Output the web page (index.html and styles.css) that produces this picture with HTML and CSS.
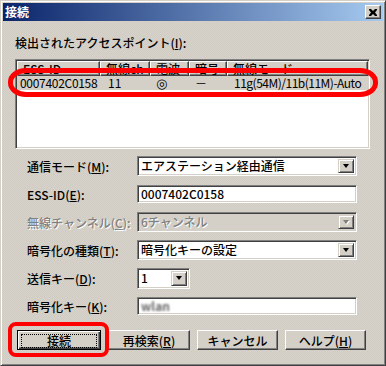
FILE: index.html
```html
<!DOCTYPE html>
<html>
<head>
    <meta charset="UTF-8">
    <title>接続</title>
    <link rel="stylesheet" href="styles.css">
</head>
<body>
    <div class="window">
        <div class="titlebar">
            <span class="title">接続</span>
            <span class="close-btn">
                <svg width="8" height="7" viewBox="0 0 8 7"><path d="M0 0h2l2 2 2-2h2v1l-2 2.5 2 2.5v1h-2l-2-2-2 2h-2v-1l2-2.5-2-2.5z" fill="#000"/></svg>
            </span>
        </div>

        <div class="content">
            <div class="list-label">検出されたアクセスポイント(<u>I</u>):</div>

            <div class="listbox">
                <div class="list-head">
                    <div class="hcell c1">ESS-ID</div>
                    <div class="hcell c2">無線ch</div>
                    <div class="hcell c3">電波</div>
                    <div class="hcell c4">暗号</div>
                    <div class="hcell c5">無線モード</div>
                </div>
                <div class="list-row">
                    <div class="cell c1">0007402C0158</div>
                    <div class="cell c2">11</div>
                    <div class="cell c3"><span class="signal">◎</span></div>
                    <div class="cell c4">－</div>
                    <div class="cell c5">11g(54M)/11b(11M)-Auto</div>
                </div>
            </div>

            <div class="form">
                <div class="form-row">
                    <label>通信モード(<u>M</u>):</label>
                    <div class="combo">
                        <span class="combo-text">エアステーション経由通信</span>
                        <span class="combo-btn"><span class="arrow"></span></span>
                    </div>
                </div>
                <div class="form-row">
                    <label>ESS-ID(<u>E</u>):</label>
                    <div class="edit">0007402C0158</div>
                </div>
                <div class="form-row disabled">
                    <label>無線チャンネル(<u>C</u>):</label>
                    <div class="combo">
                        <span class="combo-text">6チャンネル</span>
                        <span class="combo-btn"><span class="arrow"></span></span>
                    </div>
                </div>
                <div class="form-row">
                    <label>暗号化の種類(<u>T</u>):</label>
                    <div class="combo">
                        <span class="combo-text">暗号化キーの設定</span>
                        <span class="combo-btn"><span class="arrow"></span></span>
                    </div>
                </div>
                <div class="form-row">
                    <label>送信キー(<u>D</u>):</label>
                    <div class="combo small">
                        <span class="combo-text">1</span>
                        <span class="combo-btn"><span class="arrow"></span></span>
                    </div>
                </div>
                <div class="form-row">
                    <label>暗号化キー(<u>K</u>):</label>
                    <div class="edit"><span class="secret">wlan</span></div>
                </div>
            </div>

            <div class="buttons">
                <button class="btn default"><span class="focus">接続</span></button>
                <button class="btn b2">再検索(<u>R</u>)</button>
                <button class="btn">キャンセル</button>
                <button class="btn">ヘルプ(<u>H</u>)</button>
            </div>
        </div>

        <div class="mark mark-row"></div>
        <div class="mark mark-btn"></div>
    </div>
</body>
</html>
```

FILE: styles.css
```css
body { margin: 0; font-family: "Noto Sans CJK JP", "Noto Sans", sans-serif; font-size: 12px; font-weight: 500; color: #000; }
u { text-underline-offset: 1px; }

.window { position: relative; width: 386px; height: 366px; box-sizing: border-box; padding: 2px; border: 1px solid; border-color: #d4d0c8 #404040 #404040 #d4d0c8; box-shadow: inset 1px 1px #fff, inset -1px -1px #808080; background: #d4d0c8 repeating-conic-gradient(#d7d3cb 0 25%, #d0ccc4 0 50%) 0 0 / 2px 2px; }

.titlebar { height: 18px; padding: 0 2px; display: flex; align-items: center; justify-content: space-between; background: linear-gradient(to right, #0a246a, #a6caf0); }
.title { color: #fff; font-weight: bold; line-height: 18px; }
.close-btn { width: 16px; height: 14px; box-sizing: border-box; display: flex; align-items: center; justify-content: center; background: #d4d0c8; border: 1px solid; border-color: #fff #404040 #404040 #fff; box-shadow: inset -1px -1px #808080; }

.content { padding: 15px 0 0 12px; }
.list-label { line-height: 14px; height: 14px; }

.listbox { margin-top: 9px; width: 355px; height: 90px; box-sizing: border-box; padding: 1px; border: 1px solid; border-color: #808080 #fff #fff #808080; box-shadow: inset 1px 1px #404040, inset -1px -1px #d4d0c8; background: #fff; }
.list-head, .list-row { display: flex; }
.hcell { height: 15px; line-height: 13px; box-sizing: border-box; padding-left: 5px; background: #d4d0c8; border: 1px solid; border-color: #fff #404040 #404040 #fff; box-shadow: inset -1px -1px #808080; white-space: nowrap; overflow: hidden; }
.list-row { height: 14px; line-height: 14px; background: #d4d0c8; font-weight: 400; }
.cell { padding-left: 6px; box-sizing: border-box; white-space: nowrap; }
.c1 { width: 83px; }
.c2 { width: 50px; }
.c3 { width: 39px; }
.c4 { width: 38px; }
.c5 { flex: 1; }
.cell.c1 { padding-left: 3px; letter-spacing: -0.3px; }
.cell.c2 { padding-left: 8px; }
.cell.c5 { padding-left: 7px; letter-spacing: -0.5px; }
.signal { font-family: "DejaVu Sans", sans-serif; font-size: 13px; }

.form { margin-top: 3px; padding-left: 12px; }
.form-row { height: 28px; display: flex; align-items: center; }
.form-row label { width: 110px; }
.disabled label, .disabled .combo-text { color: #808080; text-shadow: 1px 1px #fff; }

.combo, .edit { width: 220px; box-sizing: border-box; padding: 2px; border: 1px solid; border-color: #808080 #fff #fff #808080; box-shadow: inset 1px 1px #404040, inset -1px -1px #d4d0c8; background: #fff; }
.combo { height: 20px; display: flex; }
.combo.small { width: 53px; height: 21px; }
.combo-text { flex: 1; line-height: 14px; padding-left: 1px; }
.combo-btn { width: 16px; box-sizing: border-box; display: flex; align-items: center; justify-content: center; background: #d4d0c8; border: 1px solid; border-color: #d4d0c8 #404040 #404040 #d4d0c8; box-shadow: inset 1px 1px #fff, inset -1px -1px #808080; }
.arrow { width: 0; height: 0; border-left: 3.5px solid transparent; border-right: 3.5px solid transparent; border-top: 4px solid #000; }
.disabled .combo { background: #d4d0c8; }
.disabled .arrow { border-top-color: #808080; filter: drop-shadow(1px 1px 0 #fff); }

.edit { height: 18px; line-height: 14px; padding: 1px 3px; }
.secret { color: #6a6a6a; font-weight: bold; filter: blur(1px); }

.buttons { margin-top: 10px; padding-left: 2px; display: flex; gap: 7px; }
.btn { width: 81px; height: 20px; padding: 0; box-sizing: border-box; font: inherit; color: #000; background: #d4d0c8; border: 1px solid; border-color: #fff #404040 #404040 #fff; box-shadow: inset -1px -1px #808080; }
.btn.default { width: 84px; padding: 3px; border-color: #000; box-shadow: inset 1px 1px #fff, inset -1px -1px #404040, inset -2px -2px #808080; }
.btn.b2 { width: 82px; }
.focus { display: block; height: 12px; line-height: 11px; border: 1px dotted #000; }

.mark { position: absolute; box-sizing: border-box; border: 5px solid #f00; }
.mark-row { left: 7px; top: 67px; width: 370px; height: 29px; border-radius: 18px / 14px; }
.mark-btn { left: 7px; top: 321px; width: 101px; height: 35px; border-width: 4px; border-radius: 8px; }
```
